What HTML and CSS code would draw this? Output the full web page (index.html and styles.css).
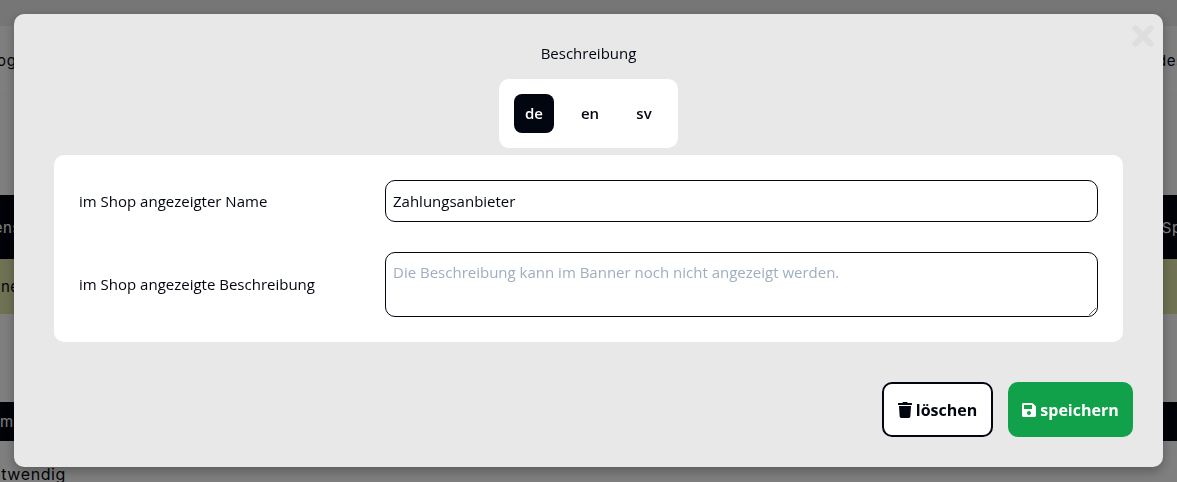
FILE: index.html
```html
<!DOCTYPE html>
<html lang="de">
<head>
  <meta charset="UTF-8">
  <meta name="viewport" content="width=device-width, initial-scale=1.0">
  <title>Beschreibung</title>
  <link rel="stylesheet" href="styles.css">
</head>
<body>
  <div class="page">
    <div class="page-top"></div>
    <div class="page-row page-row-logo"><span>Logo</span><span>des Shops</span></div>
    <div class="page-gap"></div>
    <div class="page-row page-row-head"><span>Dienst</span><span>Sprache</span></div>
    <div class="page-row page-row-green"><span>Banner</span></div>
    <div class="page-spacer"></div>
    <div class="page-row page-row-foot"><span>Name</span></div>
    <div class="page-note">notwendig</div>
  </div>

  <div class="overlay">
    <div class="modal">
      <button class="modal-close" type="button" aria-label="schließen">
        <svg viewBox="0 0 352 512" width="22" height="32"><path d="M242.72 256l100.07-100.07c12.28-12.28 12.28-32.19 0-44.48l-22.24-22.24c-12.28-12.28-32.19-12.28-44.48 0L176 189.28 75.93 89.21c-12.28-12.28-32.19-12.28-44.48 0L9.21 111.45c-12.28 12.28-12.28 32.19 0 44.48L109.28 256 9.21 356.07c-12.28 12.28-12.28 32.19 0 44.48l22.24 22.24c12.28 12.28 32.2 12.28 44.48 0L176 322.72l100.07 100.07c12.28 12.28 32.2 12.28 44.48 0l22.24-22.24c12.28-12.28 12.28-32.19 0-44.48L242.72 256z"/></svg>
      </button>
      <h2 class="modal-title">Beschreibung</h2>
      <div class="lang-tabs">
        <button class="lang-tab lang-tab-active" type="button">de</button>
        <button class="lang-tab" type="button">en</button>
        <button class="lang-tab" type="button">sv</button>
      </div>
      <div class="panel">
        <div class="field">
          <label class="field-label" for="name">im Shop angezeigter Name</label>
          <input class="field-input" id="name" type="text" value="Zahlungsanbieter">
        </div>
        <div class="field">
          <label class="field-label field-label-long" for="desc">im Shop angezeigte Beschreibung</label>
          <textarea class="field-input field-textarea" id="desc" placeholder="Die Beschreibung kann im Banner noch nicht angezeigt werden."></textarea>
        </div>
      </div>
      <div class="actions">
        <button class="btn btn-delete" type="button">
          <svg viewBox="0 0 448 512" width="14" height="16"><path fill="currentColor" d="M432 32H312l-9.4-18.7A24 24 0 0 0 281.1 0H166.8a23.72 23.72 0 0 0-21.4 13.3L136 32H16A16 16 0 0 0 0 48v32a16 16 0 0 0 16 16h416a16 16 0 0 0 16-16V48a16 16 0 0 0-16-16zM53.2 467a48 48 0 0 0 47.9 45h245.8a48 48 0 0 0 47.9-45L416 128H32z"/></svg>
          löschen
        </button>
        <button class="btn btn-save" type="button">
          <svg viewBox="0 0 448 512" width="14" height="16"><path fill="currentColor" d="M433.941 129.941l-83.882-83.882A48 48 0 0 0 316.118 32H48C21.49 32 0 53.49 0 80v352c0 26.51 21.49 48 48 48h352c26.51 0 48-21.49 48-48V163.882a48 48 0 0 0-14.059-33.941zM224 416c-35.346 0-64-28.654-64-64 0-35.346 28.654-64 64-64s64 28.654 64 64c0 35.346-28.654 64-64 64zm96-304.52V212c0 6.627-5.373 12-12 12H76c-6.627 0-12-5.373-12-12V108c0-6.627 5.373-12 12-12h228.52c3.183 0 6.235 1.264 8.485 3.515l3.48 3.48A11.996 11.996 0 0 1 320 111.48z"/></svg>
          speichern
        </button>
      </div>
    </div>
  </div>
</body>
</html>
```

FILE: styles.css
```css
* { box-sizing: border-box; }
html, body { height: 100%; }
body { margin: 0; overflow: hidden; background: #fff; font-family: "Open Sans", sans-serif; color: #020611; }

/* page behind the dialog */
.page { font-family: Inter, sans-serif; font-size: 15px; letter-spacing: 0.6px; height: 482px; overflow: hidden; }
.page-top { height: 26px; background: #ececec; }
.page-row { display: flex; justify-content: space-between; align-items: center; white-space: nowrap; }
.page-row-logo { height: 70px; margin-left: -12px; margin-right: -60px; border-bottom: 1px solid #fafafa; }
.page-gap { height: 99px; }
.page-row-head { height: 64px; background: #020611; color: #fff; margin-left: -22px; margin-right: -48px; }
.page-row-green { height: 55px; background: #dfe6a8; margin-left: -28px; }
.page-spacer { height: 88px; }
.page-row-foot { height: 39px; background: #020611; color: #fff; margin-left: -21px; }
.page-note { margin: 23px 0 0 -19px; font-size: 16px; }

.overlay { position: fixed; inset: 0; background: rgba(0, 0, 0, 0.5); padding: 14px; }

.modal { position: relative; width: 1149px; height: 453px; padding: 29px 40px 30px; background: #e8e8e8; border-radius: 10px; box-shadow: 0 4px 12px rgba(0, 0, 0, 0.3); display: flex; flex-direction: column; }
.modal-close { position: absolute; top: 6px; right: 9px; padding: 0; border: 0; background: none; fill: #dedede; cursor: pointer; }
.modal-title { margin: 0; font-size: 15px; font-weight: 400; line-height: 20px; text-align: center; }

.lang-tabs { align-self: center; display: flex; gap: 14px; margin-top: 16px; padding: 15px 14px 15px 15px; background: #fff; border-radius: 10px; }
.lang-tab { width: 40px; height: 39px; padding: 0 0 2px; border: 0; border-radius: 8px; background: none; color: #020611; font: 600 15px "Open Sans", sans-serif; }
.lang-tab-active { margin-right: 2px; background: #020611; color: #fff; }

.panel { margin-top: 7px; padding: 25px; background: #fff; border-radius: 10px; display: flex; flex-direction: column; gap: 30px; }
.field { display: flex; align-items: center; }
.field-label { width: 306px; flex: none; font-size: 15px; }
.field-label-long { margin-top: -2px; }
.field-input { flex: 1; height: 42px; padding: 0 7px; border: 1px solid #020611; border-radius: 10px; background: #fff; color: #020611; font: 15px "Open Sans", sans-serif; outline: none; }
.field-textarea { height: 65px; padding: 9px 7px 7px; display: block; }
.field-textarea::placeholder { color: #a0aec0; opacity: 1; }

.actions { display: flex; justify-content: flex-end; gap: 15px; margin: 40px -10px 0 0; }
.btn { height: 55px; display: flex; align-items: center; justify-content: center; gap: 4px; border-radius: 10px; font: 700 16px "Open Sans", sans-serif; cursor: pointer; }
.btn-delete { width: 111px; background: #fff; color: #020611; border: 2px solid #020611; }
.btn-save { width: 125px; background: #10a14a; color: #fff; border: 0; }
```
